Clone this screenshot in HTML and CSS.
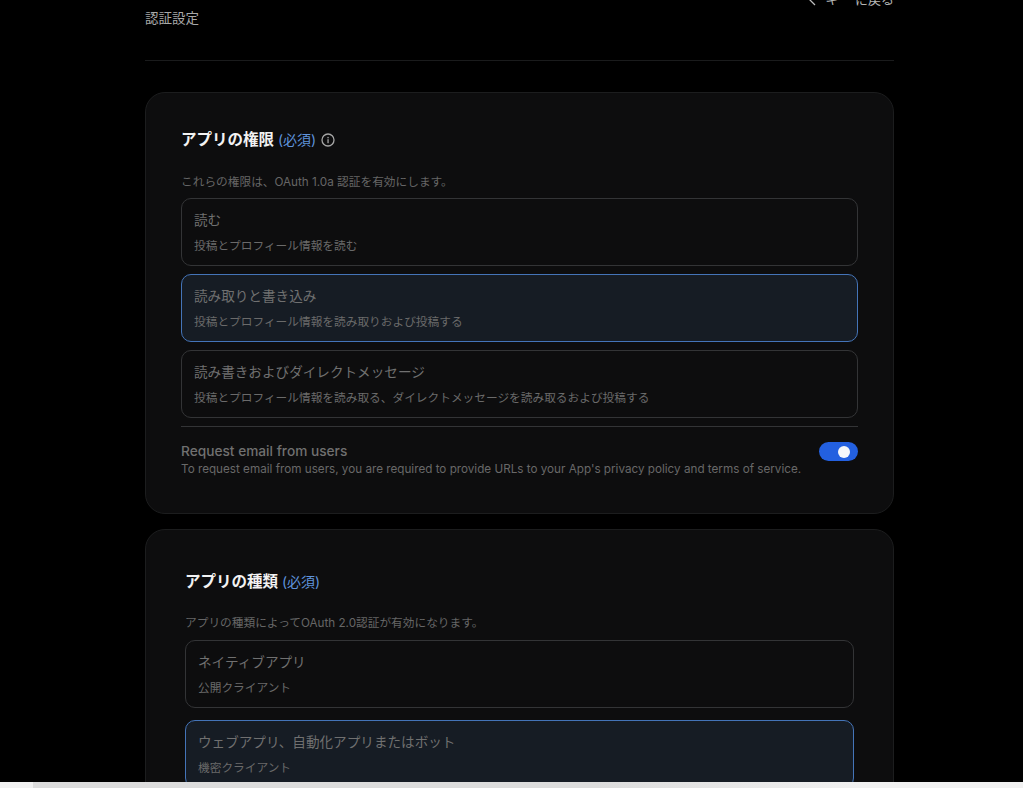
FILE: index.html
```html
<!DOCTYPE html>
<html lang="ja">
<head>
<meta charset="utf-8">
<title>認証設定</title>
<link rel="stylesheet" href="styles.css">
</head>
<body>
<div class="viewport">
  <main class="page">
    <header class="head">
      <h1 class="head-title">認証設定</h1>
      <a class="back"><svg class="back-icon" viewBox="0 0 10 16" width="10" height="16"><path d="M8 2 L2 8 L8 14" fill="none" stroke="#bdbdbd" stroke-width="1.3"/></svg>キー に戻る</a>
    </header>

    <section class="card card-a">
      <h2 class="card-title">アプリの権限 <span class="req">(必須)</span>
        <svg class="info" viewBox="0 0 14 14" width="14" height="14"><circle cx="7" cy="7" r="6" fill="none" stroke="#a6a6a6" stroke-width="1.3"/><rect x="6.4" y="6.2" width="1.3" height="4" fill="#a6a6a6"/><rect x="6.4" y="3.9" width="1.3" height="1.4" fill="#a6a6a6"/></svg>
      </h2>
      <p class="card-desc">これらの権限は、OAuth 1.0a 認証を有効にします。</p>
      <div class="options">
        <div class="option"><div class="opt-name">読む</div><div class="opt-sub">投稿とプロフィール情報を読む</div></div>
        <div class="option selected"><div class="opt-name">読み取りと書き込み</div><div class="opt-sub">投稿とプロフィール情報を読み取りおよび投稿する</div></div>
        <div class="option"><div class="opt-name">読み書きおよびダイレクトメッセージ</div><div class="opt-sub">投稿とプロフィール情報を読み取る、ダイレクトメッセージを読み取るおよび投稿する</div></div>
      </div>
      <div class="email-row">
        <div>
          <div class="email-title">Request email from users</div>
          <div class="email-desc">To request email from users, you are required to provide URLs to your App's privacy policy and terms of service.</div>
        </div>
        <span class="toggle"><span class="knob"></span></span>
      </div>
    </section>

    <section class="card card-b">
      <h2 class="card-title">アプリの種類 <span class="req">(必須)</span></h2>
      <p class="card-desc">アプリの種類によってOAuth 2.0認証が有効になります。</p>
      <div class="options options-b">
        <div class="option"><div class="opt-name">ネイティブアプリ</div><div class="opt-sub">公開クライアント</div></div>
        <div class="option selected"><div class="opt-name">ウェブアプリ、自動化アプリまたはボット</div><div class="opt-sub">機密クライアント</div></div>
      </div>
    </section>
  </main>
  <div class="hbar"><span class="hbar-thumb"></span></div>
</div>
</body>
</html>
```

FILE: styles.css
```css
* { box-sizing: border-box; }
html, body { margin: 0; height: 100%; overflow: hidden; background: #000; }
body { font-family: Inter, "Noto Sans CJK JP", sans-serif; color: #8a8a8a; }

.viewport { height: 788px; display: flex; flex-direction: column; }
.page { flex: 1; min-height: 0; overflow: hidden; width: 749px; margin-left: 145px; }

.head { height: 61px; display: flex; justify-content: space-between; align-items: flex-start; border-bottom: 1px solid #1a1b1c; }
.head-title { margin: 8px 0 0; font-size: 13.5px; line-height: 20px; font-weight: 400; color: #a8a8a8; }
.back { margin-top: -11px; font-size: 13px; line-height: 20px; color: #b4b4b4; display: flex; align-items: center; gap: 8px; }
.back-icon { display: block; }

.card { background: #0d0d0e; border: 1px solid #1c1d1e; border-radius: 20px; }
.card-a { margin-top: 31px; height: 422px; padding: 35px 35px 0; }
.card-b { margin-top: 15px; height: 400px; padding: 40px 39px 0; }

.card-title { margin: 0; height: 24px; font-size: 15.5px; line-height: 24px; font-weight: 700; color: #f2f2f2; display: flex; align-items: center; gap: 4px; }
.req { font-size: 14px; font-weight: 400; color: #5f93db; }
.info { margin-left: 1px; }
.card-desc { margin: 21px 0 0; height: 18px; font-size: 11.7px; line-height: 18px; color: #666; }
.card-b .card-desc { margin-top: 20px; }

.options { margin-top: 7px; display: flex; flex-direction: column; gap: 8px; }
.options-b { margin-top: 8px; gap: 12px; }
.option { height: 68px; padding: 10px 12px 0; border: 1px solid #333436; border-radius: 10px; }
.option.selected { background: #161c24; border-color: #4474b8; }
.opt-name { font-size: 13.6px; line-height: 22px; color: #707070; }
.opt-sub { margin-top: 6px; font-size: 11.7px; line-height: 18px; color: #6a6a6a; }

.email-row { margin-top: 8px; padding-top: 16px; border-top: 1px solid #333436; display: flex; justify-content: space-between; align-items: flex-start; }
.email-title { font-size: 13.7px; line-height: 17px; font-weight: 500; color: #707070; }
.email-desc { margin-top: 1px; font-size: 11.7px; line-height: 16px; color: #686868; }
.toggle { width: 39px; height: 19px; margin-top: -1px; border-radius: 10px; background: #2360e0; display: flex; align-items: center; justify-content: flex-end; padding-right: 8px; }
.knob { width: 12px; height: 12px; border-radius: 50%; background: #f5f7fb; }

.hbar { flex: none; height: 6px; background: #f1f1f1; padding-left: 33px; }
.hbar-thumb { display: block; height: 6px; width: 830px; background: linear-gradient(to right, #dcdcdc 68%, #f1f1f1 100%); }
```
